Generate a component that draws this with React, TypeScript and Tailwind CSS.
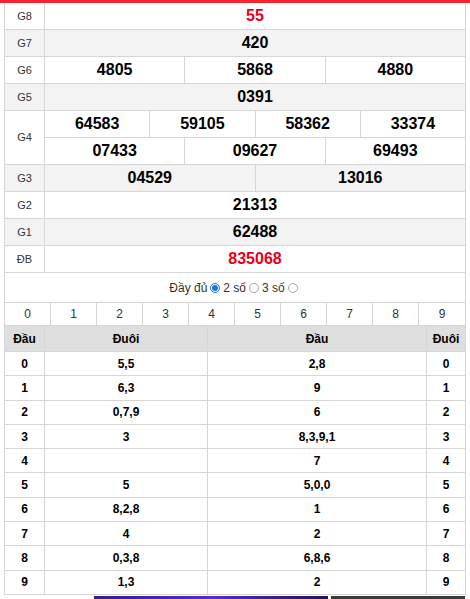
import React from "react";

type Prize = { label: string; rows: string[][]; red?: boolean };

const PRIZES: Prize[] = [
  { label: "G8", rows: [["55"]], red: true },
  { label: "G7", rows: [["420"]] },
  { label: "G6", rows: [["4805", "5868", "4880"]] },
  { label: "G5", rows: [["0391"]] },
  { label: "G4", rows: [["64583", "59105", "58362", "33374"], ["07433", "09627", "69493"]] },
  { label: "G3", rows: [["04529", "13016"]] },
  { label: "G2", rows: [["21313"]] },
  { label: "G1", rows: [["62488"]] },
  { label: "ĐB", rows: [["835068"]], red: true },
];

const LOTO = [
  ["0", "5,5", "2,8", "0"],
  ["1", "6,3", "9", "1"],
  ["2", "0,7,9", "6", "2"],
  ["3", "3", "8,3,9,1", "3"],
  ["4", "", "7", "4"],
  ["5", "5", "5,0,0", "5"],
  ["6", "8,2,8", "1", "6"],
  ["7", "4", "2", "7"],
  ["8", "0,3,8", "6,8,6", "8"],
  ["9", "1,3", "2", "9"],
];

function Radio({ checked = false }: { checked?: boolean }) {
  return checked ? (
    <span className="mx-[3px] inline-flex h-[10px] w-[10px] items-center justify-center rounded-full border border-[#1a6fe0] bg-white">
      <span className="h-[6px] w-[6px] rounded-full bg-[#1a73e8]" />
    </span>
  ) : (
    <span className="mx-[3px] inline-block h-[10px] w-[10px] rounded-full border border-[#a8a8a8] bg-white" />
  );
}

export default function App() {
  return (
    <div className="h-[599px] w-[470px] overflow-hidden bg-white font-['Liberation_Sans',Arial,sans-serif] text-[#222]">
      <div className="h-[3px] bg-[#f0252d]" />

      <div className="ml-[4px] w-[462px] border-x border-[#d6d6d6]">
        {PRIZES.map((prize, i) => (
          <div
            key={prize.label}
            className={`flex border-b border-[#d6d6d6] ${i % 2 === 1 ? "bg-[#f3f3f3]" : "bg-white"}`}
          >
            <div className="flex w-[40px] shrink-0 items-center justify-center border-r border-[#d6d6d6] text-[11px] text-[#333]">
              {prize.label}
            </div>
            <div className="flex flex-1 flex-col">
              {prize.rows.map((row, r) => {
                const last = r === prize.rows.length - 1;
                return (
                  <div key={r} className={last ? "flex h-[26px]" : "flex h-[27px] border-b border-[#d6d6d6]"}>
                    {row.map((num, c) => (
                      <div
                        key={c}
                        className={`flex flex-1 items-center justify-center text-[16px] font-bold ${
                          c < row.length - 1 ? "border-r border-[#d6d6d6]" : ""
                        } ${prize.red ? "text-[#e5001c]" : "text-black"}`}
                      >
                        {num}
                      </div>
                    ))}
                  </div>
                );
              })}
            </div>
          </div>
        ))}

        <div className="flex h-[29px] items-center justify-center text-[12px] text-[#333]">
          <span>Đầy đủ</span>
          <Radio checked />
          <span>2 số</span>
          <Radio />
          <span>3 số</span>
          <Radio />
        </div>

        <div className="grid h-[24px] grid-cols-10 border-y border-[#d6d6d6]">
          {Array.from({ length: 10 }, (_, d) => (
            <div
              key={d}
              className={`flex items-center justify-center text-[12px] text-[#333] ${d < 9 ? "border-r border-[#d6d6d6]" : ""}`}
            >
              {d}
            </div>
          ))}
        </div>

        <div className="grid h-[26px] grid-cols-[40px_163px_219px_1fr] border-b border-[#d6d6d6] bg-[#dedede] text-[12px] font-bold text-black">
          <div className="flex items-center justify-center border-r border-[#d6d6d6]">Đầu</div>
          <div className="flex items-center justify-center border-r border-[#d6d6d6]">Đuôi</div>
          <div className="flex items-center justify-center border-r border-[#d6d6d6]">Đầu</div>
          <div className="flex items-center justify-center">Đuôi</div>
        </div>

        {LOTO.map((row) => (
          <div
            key={row[0]}
            className="grid h-[24.3px] grid-cols-[40px_163px_219px_1fr] border-b border-[#d6d6d6] text-[12px] font-bold text-black"
          >
            <div className="flex items-center justify-center border-r border-[#d6d6d6]">{row[0]}</div>
            <div className="flex items-center justify-center border-r border-[#d6d6d6]">{row[1]}</div>
            <div className="flex items-center justify-center border-r border-[#d6d6d6]">{row[2]}</div>
            <div className="flex items-center justify-center">{row[3]}</div>
          </div>
        ))}
      </div>

      {/* top edge of the banner below */}
      <div className="mt-[1px] flex gap-[3px] pl-[94px]">
        <div className="h-[4px] w-[234px] bg-gradient-to-r from-[#3a1a8a] via-[#5b2bc0] to-[#241060]" />
        <div className="h-[4px] w-[134px] bg-[#3a3a3a]" />
      </div>
    </div>
  );
}
